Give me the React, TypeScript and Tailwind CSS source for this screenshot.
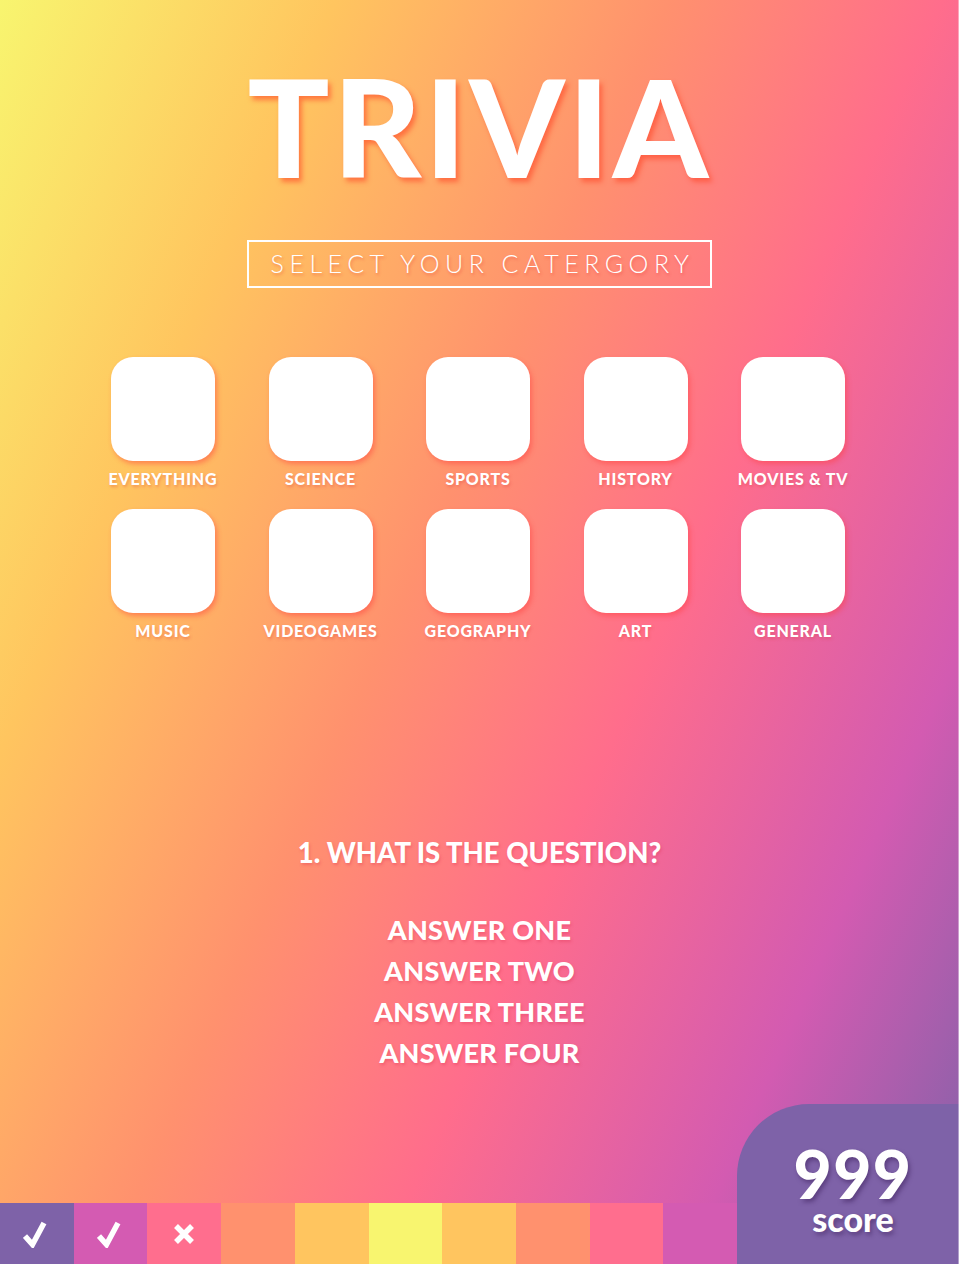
import React from "react";

const categories = [
  "EVERYTHING",
  "SCIENCE",
  "SPORTS",
  "HISTORY",
  "MOVIES & TV",
  "MUSIC",
  "VIDEOGAMES",
  "GEOGRAPHY",
  "ART",
  "GENERAL",
];

const answers = ["ANSWER ONE", "ANSWER TWO", "ANSWER THREE", "ANSWER FOUR"];

type Cell = { color: string; mark?: "check" | "cross" };

const strip: Cell[] = [
  { color: "bg-[#7E62A8]", mark: "check" },
  { color: "bg-[#D45BB2]", mark: "check" },
  { color: "bg-[#FF6E8E]", mark: "cross" },
  { color: "bg-[#FF916E]" },
  { color: "bg-[#FFC55F]" },
  { color: "bg-[#F8F56F]" },
  { color: "bg-[#FFC55F]" },
  { color: "bg-[#FF916E]" },
  { color: "bg-[#FF6E8E]" },
  { color: "bg-[#D45BB2]" },
];

function Mark({ kind }: { kind: "check" | "cross" }) {
  if (kind === "check") {
    return (
      <svg width="24" height="28" viewBox="0 0 24 28" fill="none" className="mr-[4px]">
        <path d="M2 16 L9.5 24.5 L21 3" stroke="white" strokeWidth="5.5" />
      </svg>
    );
  }
  return (
    <svg width="22" height="22" viewBox="0 0 22 22" fill="none">
      <path d="M3 3 L19 19 M19 3 L3 19" stroke="white" strokeWidth="5.5" />
    </svg>
  );
}

export default function App() {
  return (
    <div className="relative flex h-[1264px] w-full flex-col items-center overflow-hidden bg-[linear-gradient(114deg,#F8F56F_0%,#FFC55F_22%,#FF916E_44%,#FF6D8C_62%,#D35BB1_82%,#7E62A8_100%)] font-['Lato','Liberation_Sans',sans-serif] text-white">
      <h1 className="mt-[58px] text-[136px] font-black leading-none tracking-[0.025em] [text-shadow:3px_4px_5px_rgba(255,70,40,0.6)]">
        TRIVIA
      </h1>

      <div className="mt-[46px] flex h-[48px] w-[465px] items-center justify-center border-2 border-white pl-[6px] text-[25px] font-light tracking-[0.22em] [text-shadow:1px_2px_3px_rgba(230,60,60,0.45)]">
        SELECT YOUR CATERGORY
      </div>

      <div className="mr-[3px] mt-[69px] grid grid-cols-5 gap-x-[53.5px] gap-y-[21px]">
        {categories.map((name) => (
          <div key={name} className="flex w-[104px] flex-col items-center">
            <div className="h-[104px] w-[104px] rounded-[22px] bg-white shadow-[2px_3px_5px_rgba(255,60,60,0.45)]" />
            <div className="mt-[9px] whitespace-nowrap text-[16px] font-black leading-[18px] tracking-[0.05em] [text-shadow:1px_2px_3px_rgba(220,60,60,0.35)]">
              {name}
            </div>
          </div>
        ))}
      </div>

      <div className="mt-[196px] text-[27.5px] font-black leading-[34px] [text-shadow:1px_2px_3px_rgba(220,50,80,0.35)]">
        1. WHAT IS THE QUESTION?
      </div>

      <div className="mt-[39px] flex flex-col items-center">
        {answers.map((a) => (
          <div
            key={a}
            className="text-[27px] font-black leading-[41px] tracking-[0.01em] [text-shadow:1px_2px_3px_rgba(220,50,80,0.35)]"
          >
            {a}
          </div>
        ))}
      </div>

      <div className="mt-auto flex w-full items-end">
        <div className="flex h-[61px] flex-1">
          {strip.map((c, i) => (
            <div key={i} className={`flex flex-1 items-center justify-center ${c.color}`}>
              {c.mark && <Mark kind={c.mark} />}
            </div>
          ))}
        </div>
        <div className="flex h-[160px] w-[222px] flex-col items-center justify-center rounded-tl-[72px] bg-[#7E62A8] pl-[10px] pt-[14px]">
          <div className="text-[66px] font-black leading-[50px] tracking-[0.02em] [text-shadow:2px_3px_4px_rgba(60,30,90,0.5)]">
            999
          </div>
          <div className="mt-[6px] text-[34px] font-black leading-[28px] [text-shadow:2px_3px_4px_rgba(60,30,90,0.5)]">
            score
          </div>
        </div>
      </div>

      <div className="absolute inset-y-0 right-0 w-px bg-white/40" />
    </div>
  );
}
